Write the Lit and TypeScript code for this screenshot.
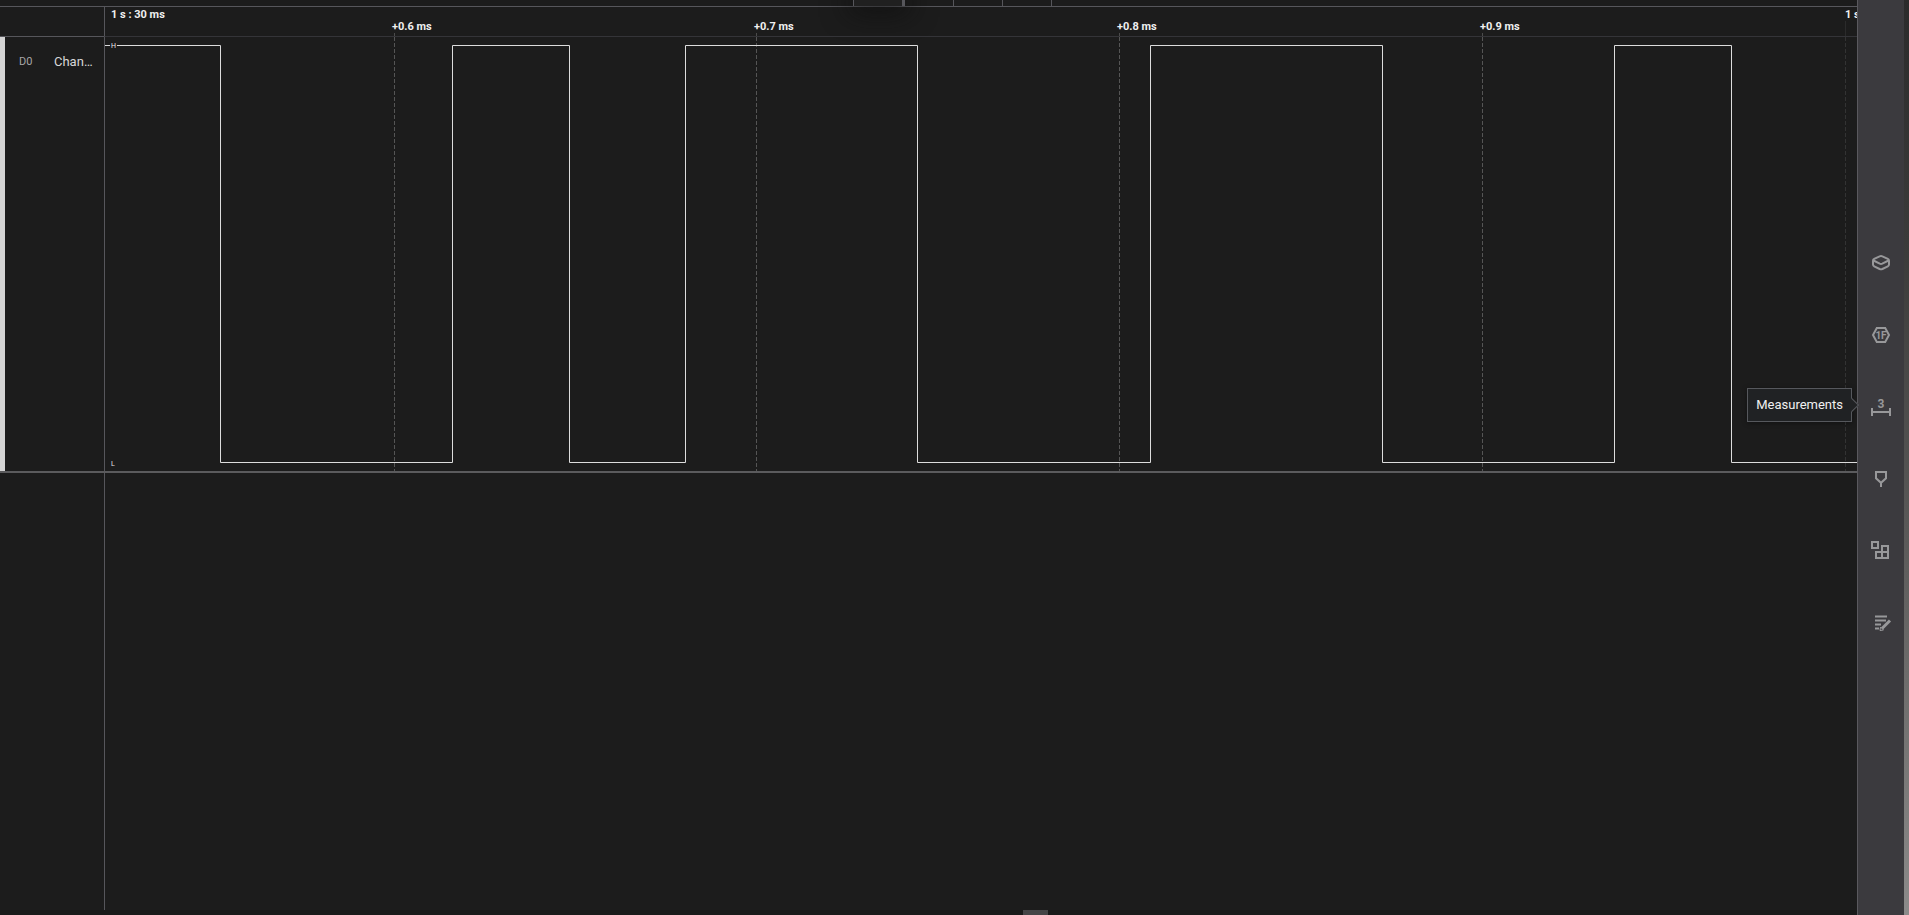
import { LitElement, html, css, svg } from "lit";
import { customElement, state } from "lit/decorators.js";

/** Width of the visible time span in plot units. */
const SPAN = 1752;
const HIGH = 8.5;
const LOW = 425.5;

/** Points in time at which the channel toggles. It starts high. */
const EDGES = [115.5, 347.5, 464.5, 580.5, 812.5, 1045.5, 1277.5, 1509.5, 1626.5];

const TICKS = [
  { at: 289, label: "+0.6 ms", major: false },
  { at: 651, label: "+0.7 ms", major: false },
  { at: 1014, label: "+0.8 ms", major: false },
  { at: 1377, label: "+0.9 ms", major: false },
  { at: 1740, label: "1 s : 31 ms", major: true },
];

const percent = (x: number) => `${(x / SPAN) * 100}%`;

const wavePath = () => {
  let level = HIGH;
  let d = `M0 ${level}`;
  for (const x of EDGES) {
    d += `H${x}`;
    level = level === HIGH ? LOW : HIGH;
    d += `V${level}`;
  }
  return `${d}H${SPAN}`;
};

const PANELS = [
  {
    name: "Devices",
    icon: svg`<path d="M10.6 5.3q1.4-.6 2.8 0l5.4 2.6q1.2.6 1.2 1.8v3.8q0 1.2-1.2 1.8l-5.4 2.7q-1.4.6-2.8 0l-5.4-2.7Q4 14.7 4 13.5V9.7q0-1.2 1.2-1.8z"/><path d="m4.5 9.5 6.2 3.2q1.3.6 2.6 0l6.2-3.2"/>`,
  },
  {
    name: "Analyzers",
    icon: svg`<path d="M7.800 5h8.400L20 12l-3.800 7H7.800L4 12z"/><text x="12" y="15.500" font-size="10">1F</text>`,
  },
  {
    name: "Measurements",
    icon: svg`<path d="M3 13v8M21 13v8M3 17h18"/><text x="12" y="13" font-size="12">3</text>`,
  },
  {
    name: "Timing markers",
    icon: svg`<path d="M7 5h10v6.2l-5 4.6-5-4.6zM12 15.5V20"/>`,
  },
  {
    name: "Extensions",
    icon: svg`<path d="M3 3h6v6H3zM7 13h6v6H7zM13 7h6v6h-6zM13 13h6v6h-6z"/>`,
  },
  {
    name: "Notes",
    icon: svg`<path d="M6 5.5h12M6 9.5h11M6 13.5h6M6 17.5h4"/><path d="M13 17.5 21 9.5" stroke-width="3"/><path d="m11.5 16 3 3-3.5.5z" stroke-width="1"/>`,
  },
];

@customElement("app-root")
export class AppRoot extends LitElement {
  @state() private hinted = "Measurements";

  static styles = css`
    :host {
      --line: #56565b;
      --ground: #1c1c1c;
      display: grid;
      grid-template-columns: minmax(0, 1fr) 47px 5px;
      height: 100vh;
      overflow: hidden;
      background: var(--ground);
      color: #f0f0f0;
      font-family: Roboto, sans-serif;
    }
    .viewer {
      display: grid;
      grid-template-columns: 104px minmax(0, 1fr);
      grid-template-rows: 7px 30px 434px 2px minmax(0, 1fr) 5px;
      min-width: 0;
    }
    .toolbar {
      grid-column: 1 / -1;
      display: flex;
      justify-content: center;
      box-sizing: border-box;
      padding-left: 48px;
      border-bottom: 1px solid var(--line);
    }
    .cell {
      box-sizing: border-box;
      width: 49px;
      border-right: 1px solid var(--line);
    }
    .cell.active {
      width: 52px;
      border-left: 1px solid var(--line);
      border-right-width: 3px;
      background: #202020;
      box-shadow: 0 0 28px 4px #0c0c0c;
    }
    .corner {
      border-bottom: 1px solid var(--line);
    }
    .ruler {
      position: relative;
      overflow: hidden;
      border-left: 1px solid var(--line);
      border-bottom: 1px solid #343438;
      font-size: 11px;
      line-height: 16px;
      font-weight: 700;
      white-space: nowrap;
    }
    .origin {
      padding-left: 6px;
    }
    .label {
      position: absolute;
      top: 12px;
      margin-left: -2px;
    }
    .label.major {
      top: 0;
      margin-left: 0;
    }
    .stem {
      position: absolute;
      bottom: 0;
      width: 1px;
      height: 3px;
      background: #4b4b4b;
    }
    .stem.major {
      height: 15px;
      background: #2b2b2b;
    }
    .channel {
      display: flex;
      align-items: flex-start;
      box-sizing: border-box;
      padding: 16px 10px 0 14px;
      border-left: 5px solid #d4d4d4;
      line-height: 18px;
    }
    .index {
      width: 35px;
      font-size: 11px;
      color: #a6a6a6;
    }
    .name {
      min-width: 0;
      flex: 1;
      overflow: hidden;
      text-overflow: ellipsis;
      white-space: nowrap;
      font-size: 13px;
      color: #d8d8d8;
    }
    .plot {
      position: relative;
      min-width: 0;
      border-left: 1px solid var(--line);
    }
    .plot svg {
      display: block;
      width: 100%;
      height: 434px;
    }
    .wave {
      fill: none;
      stroke: #dcdcdc;
      vector-effect: non-scaling-stroke;
    }
    .grid {
      stroke: #555;
      stroke-dasharray: 4 2;
      vector-effect: non-scaling-stroke;
    }
    .grid.major {
      stroke: #333;
    }
    .level {
      position: absolute;
      left: 5px;
      padding: 0 1px;
      background: var(--ground);
      opacity: 0.95;
      font-size: 7px;
      line-height: 8px;
    }
    .level.high {
      top: 5px;
    }
    .level.low {
      top: 423px;
    }
    .rule {
      grid-column: 1 / -1;
      background: #5b5b5d;
    }
    .rest {
      grid-column: 2;
      border-left: 1px solid var(--line);
    }
    .scroll {
      grid-column: 1 / -1;
      display: grid;
      grid-template-columns: 1023fr 25px 809fr;
      background: #191919;
    }
    .thumb {
      grid-column: 2;
      background: #454446;
    }
    .panels {
      display: flex;
      flex-direction: column;
      box-sizing: border-box;
      padding-top: 227px;
      border-left: 1px solid #5a595e;
      background: #3b3a3e;
    }
    .panel {
      position: relative;
      display: grid;
      place-items: center;
      height: 72px;
      padding: 0;
      border: 0;
      background: none;
      color: #98989a;
      font: inherit;
    }
    .panel svg {
      width: 24px;
      height: 24px;
      fill: none;
      stroke: currentColor;
      stroke-width: 2;
    }
    .panel text {
      fill: currentColor;
      stroke: none;
      text-anchor: middle;
      font-weight: 700;
    }
    .hint {
      position: absolute;
      right: 52px;
      top: 17px;
      padding: 8px;
      border: 1px solid #56585d;
      background: #202224;
      color: #f0f0f0;
      font-size: 13px;
      line-height: 16px;
      box-shadow: 0 1px 5px #0006;
    }
    .hint::after {
      content: "";
      position: absolute;
      right: -6px;
      top: 11px;
      width: 10px;
      height: 10px;
      box-sizing: border-box;
      border: solid #56585d;
      border-width: 1px 1px 0 0;
      background: #202224;
      transform: rotate(45deg);
    }
    .edge {
      background: linear-gradient(#2b2b2b, #3c3c3b 28%, #5a5958 58%, #8c8b8a);
    }
  `;

  render() {
    return html`
      <main class="viewer">
        <div class="toolbar">
          <div class="cell active"></div>
          <div class="cell"></div>
          <div class="cell"></div>
          <div class="cell"></div>
        </div>
        <div class="corner"></div>
        <div class="ruler">
          <div class="origin">1 s : 30 ms</div>
          ${TICKS.map(
            (t) => html`
              <span class="stem ${t.major ? "major" : ""}" style="left:${percent(t.at)}"></span>
              <span class="label ${t.major ? "major" : ""}" style="left:${percent(t.at)}">${t.label}</span>
            `
          )}
        </div>
        <div class="channel">
          <span class="index">D0</span>
          <span class="name">Channel 0</span>
        </div>
        <div class="plot">
          <svg viewBox="0 0 ${SPAN} 434" preserveAspectRatio="none" aria-hidden="true">
            ${TICKS.map(
              (t) => svg`<line class="grid ${t.major ? "major" : ""}" x1=${t.at + 0.5} x2=${t.at + 0.5} y1="0" y2="434" />`
            )}
            <path class="wave" d=${wavePath()} />
          </svg>
          <span class="level high">H</span>
          <span class="level low">L</span>
        </div>
        <div class="rule"></div>
        <div class="rest"></div>
        <div class="scroll"><div class="thumb"></div></div>
      </main>
      <nav class="panels">
        ${PANELS.map(
          (p) => html`
            <button class="panel" aria-label=${p.name} @mouseenter=${() => (this.hinted = p.name)}>
              <svg viewBox="0 0 24 24" aria-hidden="true">${p.icon}</svg>
              ${this.hinted === p.name ? html`<span class="hint" role="tooltip">${p.name}</span>` : ""}
            </button>
          `
        )}
      </nav>
      <div class="edge"></div>
    `;
  }
}
